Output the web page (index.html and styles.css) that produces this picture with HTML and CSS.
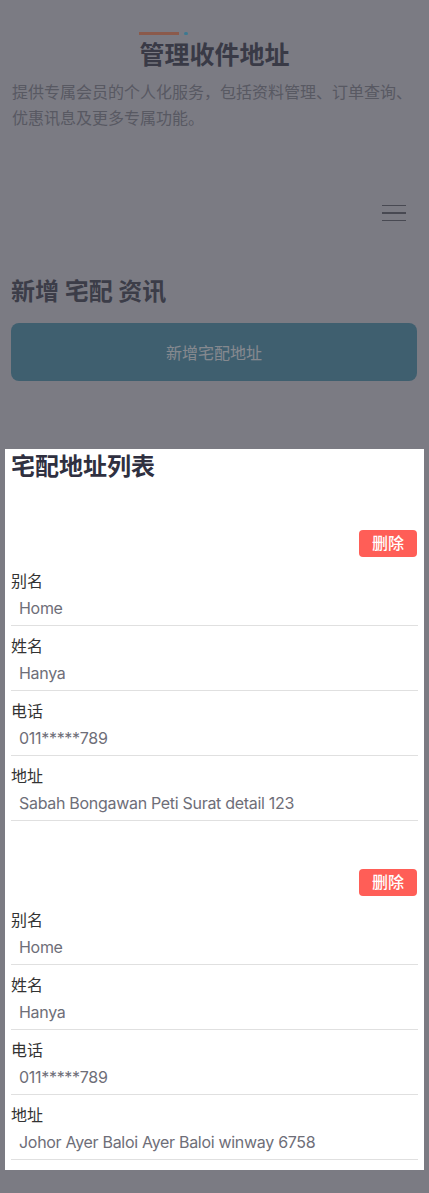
FILE: index.html
```html
<!DOCTYPE html>
<html>
<head>
	<meta charset="utf-8">
	<title>管理收件地址</title>
	<link rel="stylesheet" href="styles.css">
</head>
<body>
	<div class="page">
		<header class="intro">
			<div class="intro-head">
				<h1 class="page-title">
					<span class="title-mark"><i class="mark-bar"></i><i class="mark-dot"></i></span>
					管理收件地址
				</h1>
			</div>
			<p class="intro-text">提供专属会员的个人化服务，包括资料管理、订单查询、优惠讯息及更多专属功能。</p>
		</header>

		<div class="toolbar">
			<button class="menu-btn" type="button"><span></span><span></span><span></span></button>
		</div>

		<section class="add-section">
			<h2 class="section-title">新增 宅配 资讯</h2>
			<button class="add-btn" type="button">新增宅配地址</button>
		</section>
	</div>

	<div class="overlay">
		<div class="sheet">
			<h3 class="sheet-title">宅配地址列表</h3>

			<div class="card">
				<div class="card-actions"><button class="del-btn" type="button">删除</button></div>
				<div class="field">
					<label class="field-label">别名</label>
					<div class="field-value">Home</div>
				</div>
				<div class="field">
					<label class="field-label">姓名</label>
					<div class="field-value">Hanya</div>
				</div>
				<div class="field">
					<label class="field-label">电话</label>
					<div class="field-value">011*****789</div>
				</div>
				<div class="field">
					<label class="field-label">地址</label>
					<div class="field-value">Sabah Bongawan Peti Surat detail 123</div>
				</div>
			</div>

			<div class="card">
				<div class="card-actions"><button class="del-btn" type="button">删除</button></div>
				<div class="field">
					<label class="field-label">别名</label>
					<div class="field-value">Home</div>
				</div>
				<div class="field">
					<label class="field-label">姓名</label>
					<div class="field-value">Hanya</div>
				</div>
				<div class="field">
					<label class="field-label">电话</label>
					<div class="field-value">011*****789</div>
				</div>
				<div class="field">
					<label class="field-label">地址</label>
					<div class="field-value">Johor Ayer Baloi Ayer Baloi winway 6758</div>
				</div>
			</div>
		</div>
	</div>
</body>
</html>
```

FILE: styles.css
```css
body {
	margin: 0;
	font-family: Inter, "Noto Sans CJK SC", sans-serif;
	background-color: #e0e0e6;
}
.intro {
	padding: 32px 12px 0;
}
.intro-head {
	text-align: center;
}
.page-title {
	display: inline-block;
	margin: 0;
	font-size: 25px;
	line-height: 32px;
	font-weight: bold;
	color: #696b77;
	text-align: left;
}
.title-mark {
	display: flex;
	gap: 5px;
	height: 3px;
	margin-bottom: 4px;
}
.mark-bar {
	width: 40px;
	height: 3px;
	background-color: #fda480;
}
.mark-dot {
	width: 4px;
	height: 3px;
	border-radius: 2px;
	background-color: #6fdcff;
}
.intro-text {
	margin: 8px 0 0;
	font-size: 16px;
	line-height: 26px;
	color: #a0a2aa;
}
.toolbar {
	display: flex;
	justify-content: flex-end;
	margin-top: 60px;
	padding-right: 23px;
}
.menu-btn {
	display: flex;
	flex-direction: column;
	justify-content: center;
	gap: 6px;
	width: 24px;
	height: 44px;
	padding: 0;
	border: none;
	background: none;
}
.menu-btn span {
	display: block;
	height: 1.5px;
	background-color: #83858d;
}
.add-section {
	padding: 0 12px 0 11px;
}
.section-title {
	margin: 41px 0 0;
	font-size: 24px;
	line-height: 32px;
	font-weight: bold;
	color: #6d6f7b;
}
.add-btn {
	display: block;
	width: 100%;
	height: 58px;
	margin-top: 15px;
	border: none;
	border-radius: 8px;
	background-color: #73adc2;
	color: #f3fafc;
	font: inherit;
	font-size: 16px;
}
.overlay {
	position: fixed;
	top: 0;
	left: 0;
	right: 0;
	bottom: 0;
	display: flex;
	flex-direction: column;
	justify-content: flex-end;
	padding: 0 5px 23px;
	background-color: rgba(0, 0, 10, 0.45);
}
.sheet {
	padding: 2px 6px 10px;
	background-color: #fff;
}
.sheet-title {
	margin: 0;
	font-size: 24px;
	line-height: 31px;
	font-weight: bold;
	color: #2f3040;
}
.card {
	margin-top: 48px;
}
.card-actions {
	display: flex;
	justify-content: flex-end;
	margin-right: 1px;
}
.del-btn {
	height: 27px;
	padding: 0 13px;
	border: none;
	border-radius: 4px;
	background-color: #ff5e57;
	color: #fff;
	font: inherit;
	font-size: 16px;
	font-weight: 500;
	line-height: 27px;
}
.field {
	padding: 8px 0 5px;
	border-bottom: 1px solid #e0e0e0;
}
.card-actions + .field {
	margin-top: 4px;
}
.field-label {
	display: block;
	font-size: 16px;
	line-height: 24px;
	color: #333;
}
.field-value {
	margin-top: 3px;
	padding-left: 8px;
	font-size: 16px;
	line-height: 24px;
	letter-spacing: -0.3px;
	color: #6e6e78;
}
```
